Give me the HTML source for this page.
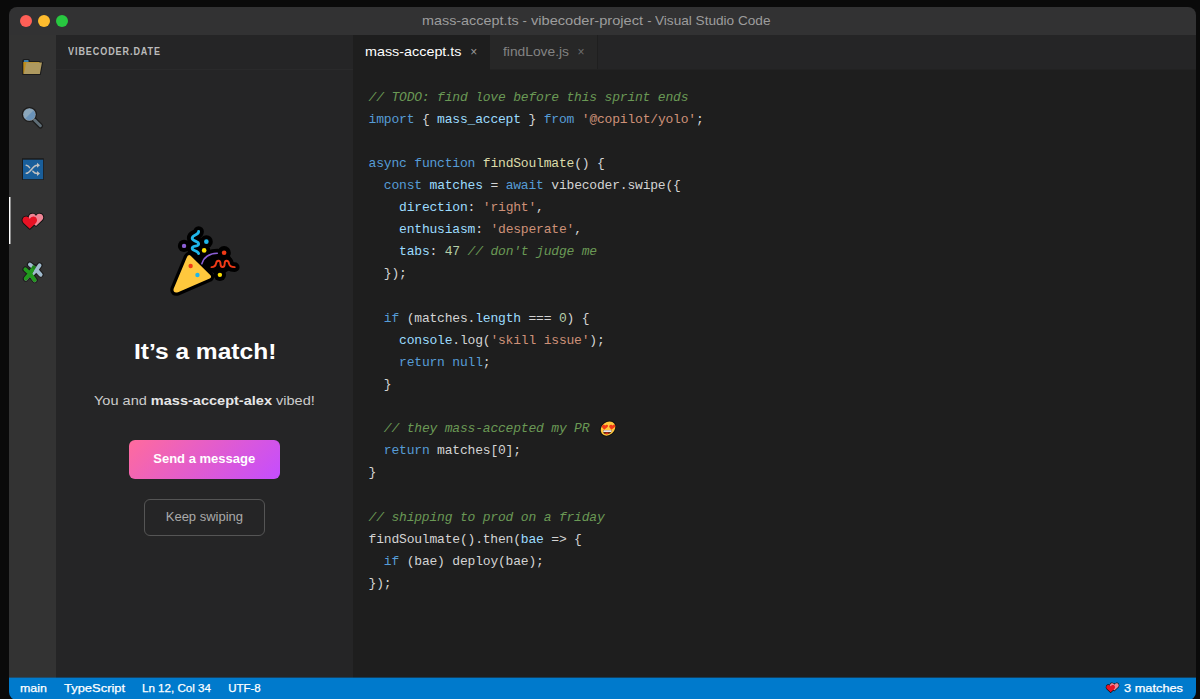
<!DOCTYPE html>
<html lang="en">
<head>
<meta charset="utf-8">
<title>mass-accept.ts - vibecoder-project - Visual Studio Code</title>
<style>
*{box-sizing:border-box;margin:0;padding:0}
html,body{width:1200px;height:699px;overflow:hidden;background:#0a0a0a}
body{position:relative;font-family:"Liberation Sans",sans-serif;color:#ccc}
.abs{position:absolute}
.t{position:absolute;white-space:pre;transform-origin:0 50%;line-height:20px;height:20px}
#title{left:9px;top:7px;width:1187px;height:28px;background:#323233;border-radius:8px 8px 0 0}
.dot{position:absolute;width:12.2px;height:12.2px;border-radius:50%;top:14.8px}
#act{left:9px;top:35px;width:47px;height:643px;background:#333333}
#side{left:56px;top:35px;width:297px;height:643px;background:#252526}
#sidehr{left:56px;top:69px;width:297px;height:1px;background:#2a2a2b}
#tabs{left:353px;top:35px;width:843px;height:34px;background:#252526}
#tabrow{left:490px;top:69px;width:706px;height:1px;background:#222222}
#tab1{left:353px;top:35px;width:137px;height:35px;background:#1e1e1e}
#tab2{left:490px;top:35px;width:108px;height:34px;background:#272727;border-right:1px solid #1f1f1f}
#editor{left:353px;top:69px;width:843px;height:609px;background:#1e1e1e}
#status{left:9px;top:678px;width:1187px;height:22px;background:#007acc;border-radius:0 0 8px 8px}
#statrow{left:9px;top:677px;width:1187px;height:1px;background:rgba(0,122,204,0.38)}
#activebar{left:9px;top:197px;width:1px;height:47px;background:#fff}
#activebar2{left:10px;top:197px;width:1px;height:47px;background:rgba(255,255,255,0.45)}
pre#code{position:absolute;left:368.6px;top:86.5px;font-family:"Liberation Mono",monospace;font-size:13px;line-height:22.11px;letter-spacing:-0.19px;color:#d4d4d4;white-space:pre}
.c{color:#6a9955;font-style:italic}.k{color:#569cd6}.f{color:#dcdcaa}.s{color:#ce9178}.v{color:#9cdcfe}.n{color:#b5cea8}
#btn1{left:128.9px;top:439.6px;width:150.7px;height:39.4px;border-radius:6px;background:linear-gradient(135deg,#ff6b9d,#c44dff);color:#fff;font-weight:700;font-size:13px;text-align:center;line-height:38.2px}
#btn2{left:144px;top:499.1px;width:120.8px;height:36.6px;border-radius:6px;border:1px solid #555;color:#aaa;font-size:13px;text-align:center;line-height:34.6px}
</style>
</head>
<body>
<div id="title" class="abs"></div>
<div class="dot" style="left:20.3px;background:#ff5f57"></div>
<div class="dot" style="left:37.8px;background:#febc2e"></div>
<div class="dot" style="left:55.8px;background:#28c840"></div>
<div class="t" style="left:421.7px;top:11px;font-size:13px;color:#9d9d9d;transform:scaleX(1.105)">mass-accept.ts</div>
<div class="t" style="left:522.4px;top:11px;font-size:13px;color:#9d9d9d">-</div>
<div class="t" style="left:530.7px;top:11px;font-size:13px;color:#9d9d9d;transform:scaleX(1.124)">vibecoder-project</div>
<div class="t" style="left:647.3px;top:11px;font-size:13px;color:#9d9d9d">-</div>
<div class="t" style="left:655.1px;top:11px;font-size:13px;color:#9d9d9d;transform:scaleX(1.0467)">Visual Studio Code</div>

<div id="act" class="abs"></div>
<div id="activebar" class="abs"></div>
<div id="activebar2" class="abs"></div>
<div id="side" class="abs"></div>
<div id="sidehr" class="abs"></div>
<div id="editor" class="abs"></div>
<div id="tabs" class="abs"></div>
<div id="tab1" class="abs"></div>
<div id="tab2" class="abs"></div>
<div id="tabrow" class="abs"></div>
<div id="status" class="abs"></div>
<div id="statrow" class="abs"></div>

<!--ICONS-->
<!-- folder -->
<svg class="abs" style="left:17px;top:50px" width="32" height="32" viewBox="0 0 32 32">
  <path d="M5.3 11 Q5.3 9 7.3 9 H11.2 Q12.5 9 12.8 10.2 L13 11 H23.2 V11.9 H26.2 L23.7 25 H5.3 Z" fill="#1b1b1b"/>
  <rect x="6.8" y="10.1" width="4.8" height="2" rx="0.7" fill="#3b7eac"/>
  <polygon points="6.3,12 22.4,12 22.4,23.9 6.3,23.9" fill="#bf8e1c"/>
  <polygon points="9.3,12.6 25,12.6 22.8,23.9 6.9,23.9" fill="#ae995f"/>
</svg>
<!-- magnifier -->
<svg class="abs" style="left:17px;top:101px" width="32" height="32" viewBox="0 0 32 32">
  <line x1="17.2" y1="18.6" x2="23.5" y2="24.9" stroke="#1b1b1b" stroke-width="5.2" stroke-linecap="round"/>
  <circle cx="12.4" cy="13.5" r="7.6" fill="#1b1b1b"/>
  <line x1="17.6" y1="19" x2="23.4" y2="24.8" stroke="#5f6e77" stroke-width="2.9" stroke-linecap="round"/>
  <circle cx="12.4" cy="13.5" r="6.3" fill="#929da5"/>
  <circle cx="12.4" cy="13.5" r="5.7" fill="#6a93b9"/>
  <path d="M8.37 17.53 A5.7 5.7 0 0 1 16.43 9.47 Z" fill="#8ba7bc"/>
</svg>
<!-- shuffle -->
<svg class="abs" style="left:17px;top:152px" width="32" height="32" viewBox="0 0 32 32">
  <rect x="5" y="6.2" width="21.8" height="21.7" fill="#1b1b1b"/>
  <rect x="6" y="7.7" width="20.1" height="19.5" fill="#195e9a"/>
  <g fill="none" stroke="#c0c0c0" stroke-width="1.5" stroke-linecap="round">
    <path d="M9.2 21.3 C13.5 21.3 15.5 13.3 20.2 13.3"/>
    <path d="M9.2 13.2 C10.8 13.2 11.8 14.4 12.6 15.6"/>
    <path d="M15.9 19.2 C17 20.6 18.4 21.5 20.2 21.5"/>
  </g>
  <path d="M20 10.8 L23 13.3 L20 15.8 Z M20 19 L23 21.5 L20 24 Z" fill="#c0c0c0"/>
</svg>
<!-- hearts -->
<svg class="abs" style="left:17px;top:205px" width="32" height="32" viewBox="0 0 32 32">
  <path d="M7.1 12.4 L0.9 6.6 C-1.8 3.4 1 -0.6 4.3 0.3 C5.6 0.6 6.6 1.4 7.1 2.6 C7.6 1.4 8.6 0.6 9.9 0.3 C13.2 -0.6 16 3.4 13.3 6.6 Z" transform="translate(11.9,8.5)" fill="#111" stroke="#111" stroke-width="1.8" stroke-linejoin="round"/>
  <path d="M7.1 12.4 L0.9 6.6 C-1.8 3.4 1 -0.6 4.3 0.3 C5.6 0.6 6.6 1.4 7.1 2.6 C7.6 1.4 8.6 0.6 9.9 0.3 C13.2 -0.6 16 3.4 13.3 6.6 Z" transform="translate(5.7,11.4)" fill="#111" stroke="#111" stroke-width="1.8" stroke-linejoin="round"/>
  <path d="M7.1 12.4 L0.9 6.6 C-1.8 3.4 1 -0.6 4.3 0.3 C5.6 0.6 6.6 1.4 7.1 2.6 C7.6 1.4 8.6 0.6 9.9 0.3 C13.2 -0.6 16 3.4 13.3 6.6 Z" transform="translate(11.9,8.5)" fill="#ee8595"/>
  <path d="M7.1 12.4 L0.9 6.6 C-1.8 3.4 1 -0.6 4.3 0.3 C5.6 0.6 6.6 1.4 7.1 2.6 C7.6 1.4 8.6 0.6 9.9 0.3 C13.2 -0.6 16 3.4 13.3 6.6 Z" transform="translate(5.7,11.4)" fill="#e81224"/>
</svg>
<!-- puzzle -->
<svg class="abs" style="left:17px;top:255px" width="32" height="32" viewBox="0 0 32 32">
  <g stroke-linecap="round" stroke-linejoin="round" fill="none">
    <path d="M13 18.6 L8.4 14.4 M13 18.6 L8.8 23.6 M13 18.6 L17.7 25 M13 18.6 L17 11.8 M19.4 14.9 L12.9 9.5 M19.4 14.9 L22.6 10.3 M19.4 14.9 L23.6 19.5 M19.4 14.9 L15.5 19" stroke="#1b1b1b" stroke-width="6"/>
    <path d="M8.9 24.2 L13 19.2 L17.8 25.6 M19.4 15.5 L23.7 20.1" stroke="#6f7478" stroke-width="3.6"/>
    <path d="M19.4 14.9 L12.9 9.5 M19.4 14.9 L22.6 10.3 M19.4 14.9 L23.6 19.5 M19.4 14.9 L15.5 19" stroke="#9fbacd" stroke-width="3.8"/>
    <path d="M13 18.6 L17.6 11" stroke="#1c8019" stroke-width="3.8" stroke-linecap="butt"/>
    <path d="M13 18.6 L8.4 14.4 M13 18.6 L8.8 23.6 M13 18.6 L17.7 25 M13 18.6 L15 15.2" stroke="#219a1d" stroke-width="3.9"/>
  </g>
</svg>
<!-- party popper -->
<svg class="abs" style="left:160px;top:215px" width="90" height="90" viewBox="0 0 699 699">
  <g fill="none" stroke="#000" stroke-linecap="round" stroke-linejoin="round">
    <path d="M300 128 C300 160 250 150 250 180 C250 205 300 200 300 225 C300 250 250 235 250 258 C250 280 295 275 300 300" stroke-width="82"/>
    <path d="M325 378 Q350 300 445 297" stroke-width="70"/>
    <path d="M400 405 C425 405 432 395 436 375 C441 348 470 348 470 380 C470 412 502 412 502 380 C502 348 531 348 536 378 C540 400 558 405 580 405" stroke-width="76"/>
  </g>
  <g fill="#000">
    <polygon points="330,385 350,320 445,280 545,320 585,400 470,470 390,440"/>
    <circle cx="187" cy="240" r="48"/><circle cx="360" cy="207" r="50"/><circle cx="343" cy="275" r="48"/>
    <circle cx="498" cy="293" r="52"/><circle cx="465" cy="465" r="48"/>
  </g>
  <path d="M238 316 L392 468 Q404 484 386 494 L140 600 Q98 610 106 572 L206 334 Q218 300 238 316 Z" fill="#ffc83d" stroke="#000" stroke-width="50" stroke-linejoin="round" paint-order="stroke"/>
  <g fill="none" stroke-linecap="round" stroke-linejoin="round">
    <path d="M300 128 C300 160 250 150 250 180 C250 205 300 200 300 225 C300 250 250 235 250 258 C250 280 295 275 300 300" stroke="#1fb6ea" stroke-width="22"/>
    <path d="M325 378 Q350 300 445 297" stroke="#8b5fd6" stroke-width="12"/>
    <path d="M400 405 C425 405 432 395 436 375 C441 348 470 348 470 380 C470 412 502 412 502 380 C502 348 531 348 536 378 C540 400 558 405 580 405" stroke="#f03a17" stroke-width="15"/>
  </g>
  <circle cx="187" cy="240" r="17" fill="#8b5fd6"/>
  <circle cx="360" cy="207" r="18" fill="#1fb6ea"/>
  <circle cx="343" cy="275" r="18" fill="#fce100"/>
  <circle cx="498" cy="293" r="18" fill="#f03a17"/>
  <circle cx="465" cy="465" r="17" fill="#fce100"/>
  <circle cx="238" cy="396" r="17" fill="#f03a17"/>
  <circle cx="291" cy="466" r="17" fill="#1fb6ea"/>
</svg>
<!-- heart eyes -->
<svg class="abs" style="left:592px;top:414px" width="32" height="32" viewBox="0 0 32 32">
  <g transform="translate(16,14.6) skewX(-13)">
    <circle cx="0" cy="0" r="8.1" fill="#111"/>
    <circle cx="0" cy="0" r="7.1" fill="#ffc83d"/>
    <path d="M7.1 12.4 L0.9 6.6 C-1.8 3.4 1 -0.6 4.3 0.3 C5.6 0.6 6.6 1.4 7.1 2.6 C7.6 1.4 8.6 0.6 9.9 0.3 C13.2 -0.6 16 3.4 13.3 6.6 Z" transform="translate(-6.6,-3.9) scale(0.42,0.40)" fill="#f03a17"/>
    <path d="M7.1 12.4 L0.9 6.6 C-1.8 3.4 1 -0.6 4.3 0.3 C5.6 0.6 6.6 1.4 7.1 2.6 C7.6 1.4 8.6 0.6 9.9 0.3 C13.2 -0.6 16 3.4 13.3 6.6 Z" transform="translate(0.7,-3.9) scale(0.42,0.40)" fill="#f03a17"/>
    <path d="M-4.3 1.6 H4.3 Q4.3 5.6 0 5.6 Q-4.3 5.6 -4.3 1.6 Z" fill="#5a2a12"/>
    <rect x="-4.1" y="1.6" width="8.2" height="1.7" rx="0.5" fill="#e9e9ee"/>
    <ellipse cx="0" cy="4.8" rx="1.8" ry="0.8" fill="#e02a1a"/>
  </g>
</svg>
<!-- status hearts -->
<svg class="abs" style="left:1103px;top:677.7px" width="19.2" height="19.2" viewBox="0 0 32 32">
  <path d="M7.1 12.4 L0.9 6.6 C-1.8 3.4 1 -0.6 4.3 0.3 C5.6 0.6 6.6 1.4 7.1 2.6 C7.6 1.4 8.6 0.6 9.9 0.3 C13.2 -0.6 16 3.4 13.3 6.6 Z" transform="translate(11.9,8.5)" fill="#111" stroke="#111" stroke-width="2" stroke-linejoin="round"/>
  <path d="M7.1 12.4 L0.9 6.6 C-1.8 3.4 1 -0.6 4.3 0.3 C5.6 0.6 6.6 1.4 7.1 2.6 C7.6 1.4 8.6 0.6 9.9 0.3 C13.2 -0.6 16 3.4 13.3 6.6 Z" transform="translate(5.7,11.4)" fill="#111" stroke="#111" stroke-width="2" stroke-linejoin="round"/>
  <path d="M7.1 12.4 L0.9 6.6 C-1.8 3.4 1 -0.6 4.3 0.3 C5.6 0.6 6.6 1.4 7.1 2.6 C7.6 1.4 8.6 0.6 9.9 0.3 C13.2 -0.6 16 3.4 13.3 6.6 Z" transform="translate(11.9,8.5)" fill="#ee8595"/>
  <path d="M7.1 12.4 L0.9 6.6 C-1.8 3.4 1 -0.6 4.3 0.3 C5.6 0.6 6.6 1.4 7.1 2.6 C7.6 1.4 8.6 0.6 9.9 0.3 C13.2 -0.6 16 3.4 13.3 6.6 Z" transform="translate(5.7,11.4)" fill="#e81224"/>
</svg>
<!--/ICONS-->
<div class="t" style="left:67.9px;top:41.4px;font-size:11px;font-weight:700;color:#bbbbbb;letter-spacing:1.13px;transform:scaleX(0.82)">VIBECODER.DATE</div>
<div class="t" style="left:364.75px;top:41.8px;font-size:13px;color:#ffffff;transform:scaleX(1.104)">mass-accept.ts</div>
<div class="t" style="left:470.2px;top:41.9px;font-size:12px;color:#9a9a9a">×</div>
<div class="t" style="left:503px;top:41.8px;font-size:13px;color:#838383;transform:scaleX(1.0618)">findLove.js</div>
<div class="t" style="left:577.6px;top:41.9px;font-size:12px;color:#6e6e6e">×</div>

<div class="t" style="left:133.6px;top:341.9px;font-size:22px;font-weight:700;color:#ffffff;transform:scaleX(1.116)">It’s a match!</div>
<div class="t" style="left:94.2px;top:390.9px;font-size:13px;color:#cccccc;transform:scaleX(1.1175)">You and <b style="color:#e6e6e6">mass-accept-alex</b> vibed!</div>
<div id="btn1" class="abs">Send a message</div>
<div id="btn2" class="abs">Keep swiping</div>

<pre id="code"><span class="c">// TODO: find love before this sprint ends</span>
<span class="k">import</span> { <span class="v">mass_accept</span> } <span class="k">from</span> <span class="s">'@copilot/yolo'</span>;

<span class="k">async</span> <span class="k">function</span> <span class="f">findSoulmate</span>() {
  <span class="k">const</span> <span class="v">matches</span> = <span class="k">await</span> vibecoder.swipe({
    <span class="v">direction</span>: <span class="s">'right'</span>,
    <span class="v">enthusiasm</span>: <span class="s">'desperate'</span>,
    <span class="v">tabs</span>: <span class="n">47</span> <span class="c">// don't judge me</span>
  });

  <span class="k">if</span> (matches.<span class="v">length</span> === <span class="n">0</span>) {
    <span class="v">console</span>.log(<span class="s">'skill issue'</span>);
    <span class="k">return</span> <span class="k">null</span>;
  }

  <span class="c">// they mass-accepted my PR</span>
  <span class="k">return</span> matches[0];
}

<span class="c">// shipping to prod on a friday</span>
findSoulmate().then(<span class="v">bae</span> =&gt; {
  <span class="k">if</span> (bae) deploy(bae);
});</pre>

<div class="t" style="left:19.8px;top:678.1px;font-size:11.5px;color:#ffffff;-webkit-text-stroke:0.25px #fff;transform:scaleX(1.0787)">main</div>
<div class="t" style="left:64px;top:678.1px;font-size:11.5px;color:#ffffff;-webkit-text-stroke:0.25px #fff;transform:scaleX(1.125)">TypeScript</div>
<div class="t" style="left:141.6px;top:678.1px;font-size:11.5px;color:#ffffff;-webkit-text-stroke:0.25px #fff;transform:scaleX(1.007)">Ln 12, Col 34</div>
<div class="t" style="left:228.2px;top:678.1px;font-size:11.5px;color:#ffffff;-webkit-text-stroke:0.25px #fff;transform:scaleX(1.0)">UTF-8</div>
<div class="t" style="left:1124px;top:678.1px;font-size:11.5px;color:#ffffff;-webkit-text-stroke:0.25px #fff;transform:scaleX(1.112)">3 matches</div>
</body>
</html>
